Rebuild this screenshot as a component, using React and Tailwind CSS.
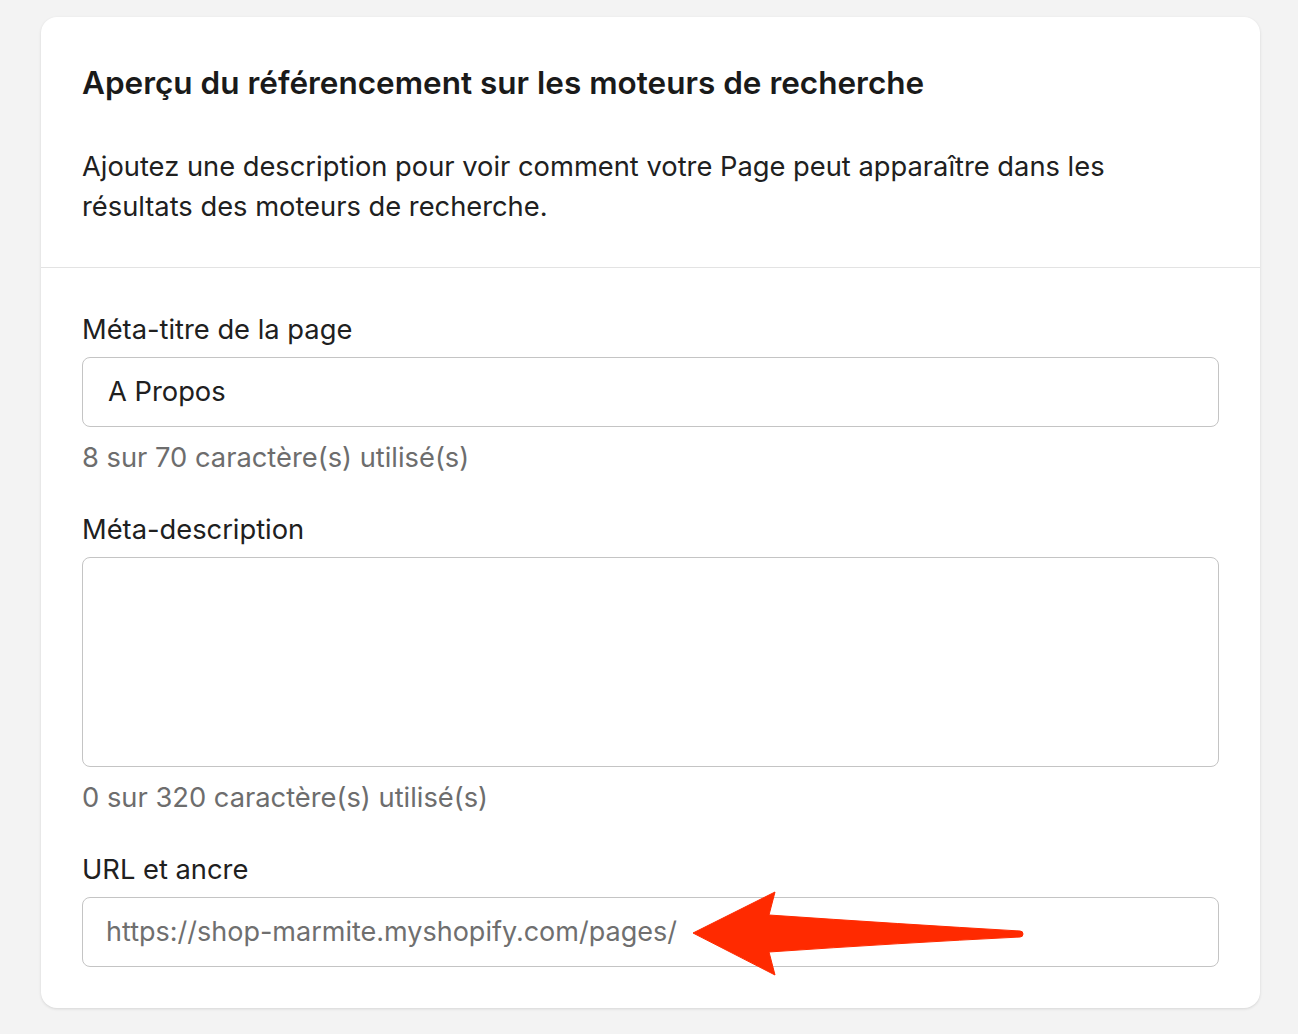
import React from "react";

const font = { fontFamily: "Inter, 'Noto Sans', 'Liberation Sans', sans-serif" };

function Arrow() {
  return (
    <svg
      className="absolute left-0 top-0 overflow-visible pointer-events-none"
      width="1" height="1"
    >
      <path
        d="M611 36 L693 -5 L687 18 Q818 27 938 34 A3 3 0 0 1 938 40 Q818 46 687 55 L693 78 Z"
        fill="#ff2a00"
        stroke="#ff2a00"
        strokeWidth="1"
        strokeLinejoin="round"
      />
    </svg>
  );
}

export default function App() {
  return (
    <div className="min-h-[1034px] bg-[#f3f3f3] pt-[17px] pl-[41px] pr-[38px]" style={font}>
      <div className="bg-white rounded-[16px] shadow-[0_1px_3px_rgba(0,0,0,0.12)] w-[1219px]">
        <div className="px-[41px] pt-[46px] pb-[40px]">
          <h2 className="text-[31.5px] leading-[40px] font-semibold text-[#1a1a1a]">
            Aperçu du référencement sur les moteurs de recherche
          </h2>
          <p className="mt-[44px] text-[27.3px] leading-[40px] text-[#202020] pr-[80px]">
            Ajoutez une description pour voir comment votre Page peut apparaître dans les résultats des moteurs de recherche.
          </p>
        </div>
        <div className="border-t border-[#e3e3e3] px-[41px] pt-[42px] pb-[41px]">
          <label className="block text-[27.3px] leading-[40px] text-[#202020]">Méta-titre de la page</label>
          <div className="mt-[7px] h-[70px] border border-[#c4c4c4] rounded-[8px] flex items-center pl-[25px] text-[27.3px] text-[#202020]">
            A Propos
          </div>
          <p className="mt-[11px] text-[27.3px] leading-[40px] text-[#6d6d6d]">8 sur 70 caractère(s) utilisé(s)</p>

          <label className="block mt-[32px] text-[27.3px] leading-[40px] text-[#202020]">Méta-description</label>
          <div className="mt-[7px] h-[210px] border border-[#c4c4c4] rounded-[8px]"></div>
          <p className="mt-[11px] text-[27.3px] leading-[40px] text-[#6d6d6d]">0 sur 320 caractère(s) utilisé(s)</p>

          <label className="block mt-[32px] text-[27.3px] leading-[40px] text-[#202020]">URL et ancre</label>
          <div className="relative mt-[7px]">
            <div className="h-[70px] border border-[#c4c4c4] rounded-[8px] flex items-center pl-[23px] text-[27px] text-[#6f6f6f]">
              https://shop-marmite.myshopify.com/pages/
            </div>
            <Arrow />
          </div>
        </div>
      </div>
    </div>
  );
}
